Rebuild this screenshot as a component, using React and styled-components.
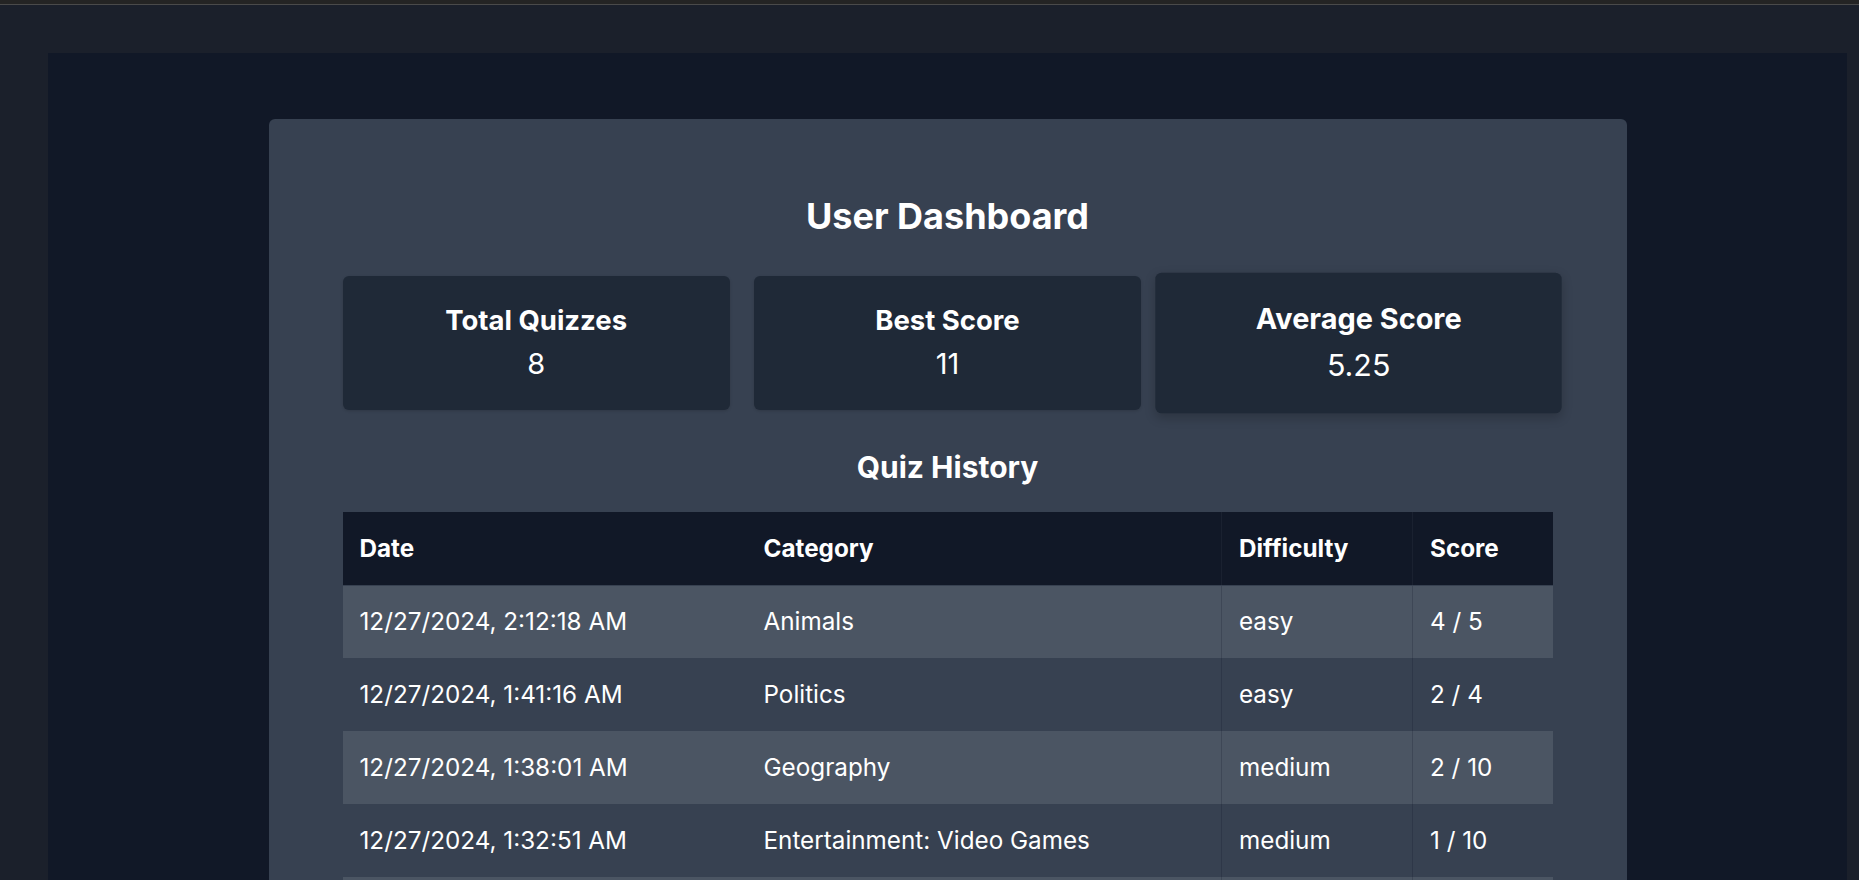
import React from "react";
import styled, { createGlobalStyle } from "styled-components";

const GlobalStyle = createGlobalStyle`
  html, body {
    margin: 0;
    padding: 0;
    background: #1b202b;
    font-family: Inter, "Noto Sans", "Liberation Sans", sans-serif;
    color: #ffffff;
  }
  * { box-sizing: border-box; }
`;

const stats = [
  { label: "Total Quizzes", value: "8" },
  { label: "Best Score", value: "11" },
  { label: "Average Score", value: "5.25", active: true },
];

const history = [
  { date: "12/27/2024, 2:12:18 AM", category: "Animals", difficulty: "easy", score: "4 / 5" },
  { date: "12/27/2024, 1:41:16 AM", category: "Politics", difficulty: "easy", score: "2 / 4" },
  { date: "12/27/2024, 1:38:01 AM", category: "Geography", difficulty: "medium", score: "2 / 10" },
  { date: "12/27/2024, 1:32:51 AM", category: "Entertainment: Video Games", difficulty: "medium", score: "1 / 10" },
  { date: "12/27/2024, 1:20:44 AM", category: "General Knowledge", difficulty: "hard", score: "11 / 15" },
  { date: "12/27/2024, 1:12:09 AM", category: "Science & Nature", difficulty: "easy", score: "6 / 10" },
  { date: "12/27/2024, 1:05:37 AM", category: "History", difficulty: "medium", score: "8 / 10" },
  { date: "12/27/2024, 12:58:22 AM", category: "Sports", difficulty: "hard", score: "8 / 20" },
];

const columns = [
  { key: "date", title: "Date", width: 404 },
  { key: "category", title: "Category", width: 475 },
  { key: "difficulty", title: "Difficulty", width: 191, divided: true },
  { key: "score", title: "Score", width: 140, divided: true },
];

function Dashboard() {
  return (
    <Main>
      <Card>
        <Title>User Dashboard</Title>
        <StatGrid>
          {stats.map((s) => (
            <StatCard key={s.label} $active={s.active}>
              <StatLabel>{s.label}</StatLabel>
              <StatValue>{s.value}</StatValue>
            </StatCard>
          ))}
        </StatGrid>
        <SubTitle>Quiz History</SubTitle>
        <Table>
          <colgroup>
            {columns.map((c) => (
              <col key={c.key} style={{ width: c.width }} />
            ))}
          </colgroup>
          <thead>
            <tr>
              {columns.map((c) => (
                <HeadCell key={c.key} $divided={c.divided}>{c.title}</HeadCell>
              ))}
            </tr>
          </thead>
          <tbody>
            {history.map((row, i) => (
              <Row key={i} $odd={i % 2 === 0}>
                {columns.map((c) => (
                  <Cell key={c.key} $divided={c.divided}>{row[c.key]}</Cell>
                ))}
              </Row>
            ))}
          </tbody>
        </Table>
      </Card>
    </Main>
  );
}

export default function App() {
  return (
    <>
      <GlobalStyle />
      <TopEdge />
      <Frame>
        <Dashboard />
      </Frame>
    </>
  );
}

const TopEdge = styled.div`
  height: 5px;
  background: #242424;
  border-bottom: 1px solid #4a4a4a;
`;

const Frame = styled.div`
  padding: 48px 12px 0 48px;
  background: #1b202b;
`;

const Main = styled.main`
  display: flex;
  justify-content: center;
  background: #111827;
  padding: 66px 0 60px;
  min-height: 900px;
`;

const Card = styled.section`
  width: 1358px;
  background: #374151;
  border-radius: 6px;
  padding: 77px 74px 48px;
`;

const Title = styled.h1`
  margin: 0 0 40px;
  text-align: center;
  font-size: 36px;
  line-height: 40px;
  font-weight: 700;
`;

const StatGrid = styled.div`
  display: grid;
  grid-template-columns: repeat(3, 1fr);
  gap: 24px;
`;

const StatCard = styled.div`
  background: #1f2937;
  border-radius: 6px;
  padding: 26px 16px 28px;
  text-align: center;
  transform: ${(p) => (p.$active ? "scale(1.05)" : "none")};
  box-shadow: ${(p) => (p.$active ? "0 4px 10px rgba(0,0,0,0.2)" : "0 1px 3px rgba(0,0,0,0.15)")};
`;

const StatLabel = styled.h3`
  margin: 0;
  font-size: 27.5px;
  line-height: 36px;
  font-weight: 700;
`;

const StatValue = styled.p`
  margin: 8px 0 0;
  font-size: 29px;
  line-height: 36px;
  font-weight: 400;
`;

const SubTitle = styled.h2`
  margin: 39px 0 27px;
  text-align: center;
  font-size: 30px;
  line-height: 36px;
  font-weight: 700;
`;

const Table = styled.table`
  width: 100%;
  table-layout: fixed;
  border-collapse: collapse;
  text-align: left;
`;

const HeadCell = styled.th`
  background: #111827;
  height: 73px;
  padding: 0 17px;
  font-size: 24.25px;
  font-weight: 700;
  border-left: ${(p) => (p.$divided ? "1px solid #1a2130" : "none")};
  border-bottom: 1px solid #374151;
`;

const Row = styled.tr`
  background: ${(p) => (p.$odd ? "#4b5563" : "#374151")};
`;

const Cell = styled.td`
  height: 73px;
  padding: 0 17px;
  font-size: 24.25px;
  font-weight: 400;
  border-left: ${(p) => (p.$divided ? "1px solid rgba(17, 24, 39, 0.22)" : "none")};
`;
